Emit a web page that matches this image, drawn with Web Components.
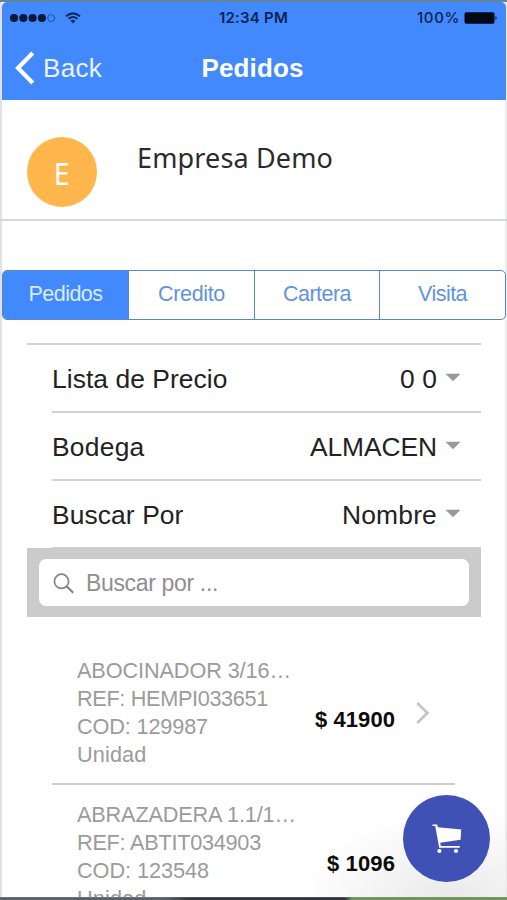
<!DOCTYPE html>
<html lang="es">
<head>
<meta charset="utf-8">
<title>Pedidos</title>
<style>
body{margin:0;width:507px;height:900px;overflow:hidden;background:#fff;font-family:"Liberation Sans",Arial,sans-serif}
</style>
</head>
<body>
<order-screen></order-screen>
<script>
const define=(name,html,setup)=>customElements.define(name,class extends HTMLElement{
  connectedCallback(){
    if(this.shadowRoot)return;
    const t=document.createElement('template');
    t.innerHTML=html;
    this.attachShadow({mode:'open'}).append(t.content.cloneNode(true));
    if(setup)setup(this,this.shadowRoot);
  }
});

// Text whose tracking is adjusted so that it takes the width given in "w".
define('fit-text',`<style>:host{display:inline-block;white-space:nowrap}span{display:inline-block}</style><span><slot></slot></span>`,(el,root)=>{
  const w=+el.getAttribute('w'),s=root.querySelector('span');
  const n=el.textContent.length;
  if(w&&n>1){
    s.style.letterSpacing=((w-s.getBoundingClientRect().width)/n).toFixed(3)+'px';
  }
});

define('status-bar',`<style>
:host{display:grid;grid-template-columns:1fr auto 1fr;align-items:center;height:32px;padding:0 8px 0 7px;color:#0b2250;font:600 15px/32px Inter,sans-serif;box-sizing:border-box}
svg{display:block}.l{display:flex;align-items:center;gap:9px}.r{display:flex;align-items:center;justify-content:flex-end;gap:4px;font-weight:500}
</style>
<div class="l"><svg width="47" height="10" viewBox="0 0 47 10"><g fill="#081a3c"><circle cx="5" cy="5" r="4.1"/><circle cx="14.3" cy="5" r="4.1"/><circle cx="23.6" cy="5" r="4.1"/><circle cx="32.9" cy="5" r="4.1"/></g><circle cx="42.2" cy="5" r="3.5" fill="none" stroke="#24509a" stroke-width="1"/></svg>
<svg width="16" height="12" viewBox="0 0 16 12" fill="none" stroke="#0f2a5c"><path d="M1 4.3Q8-1.6 15 4.3" stroke-width="2"/><path d="M3.5 6.8Q8 3.2 12.5 6.8" stroke-width="1.8"/><path d="M5.4 8.6Q8 6.7 10.6 8.6L8 11.5Z" fill="#0f2a5c" stroke="none"/></svg></div>
<fit-text w="69">12:34 PM</fit-text>
<div class="r"><fit-text w="43">100%</fit-text><svg width="34" height="12" viewBox="0 0 34 12"><rect x=".5" y=".3" width="30" height="11.4" rx="1.8" fill="#020914"/><path d="M31.5 4q2.2 2 0 4z" fill="#020914"/></svg></div>`);

define('nav-bar',`<style>
:host{display:grid;grid-template-columns:1fr auto 1fr;align-items:center;height:66px;padding:2px 15px 0 12px;color:#fff;box-sizing:border-box}
.b{display:flex;align-items:center;gap:8px;font-size:26px;color:#eaf3ff}h1{margin:0;font-size:26px;line-height:30px}svg{display:block}
</style>
<div class="b"><svg width="21" height="34" viewBox="0 0 21 34" fill="none" stroke="#fff" stroke-width="4.2"><path d="M18.8 2 4 17l14.8 15"/></svg><fit-text w="59">Back</fit-text></div>
<h1><fit-text w="102">Pedidos</fit-text></h1><span></span>`);

define('app-header',`<style>
:host{display:block;height:98px;margin:0 1px 0 2px;background:#4289fd;border-radius:5px 5px 0 0}
</style><status-bar></status-bar><nav-bar></nav-bar>`);

define('company-card',`<style>
:host{display:flex;align-items:flex-start;gap:40px;border-bottom:2px solid #d8d8da;padding:37px 0 0 27px;box-sizing:content-box;height:82px;font-family:"Noto Sans","Open Sans",sans-serif}
.a{width:70px;height:70px;border-radius:50%;background:#ffb74d;color:#fff;display:flex;align-items:center;justify-content:center;font-size:31px;line-height:70px;padding-top:2px;height:68px}
.a span{transform:scaleX(.92)}
.n{font-size:27px;line-height:40px;color:#2b2b2d;margin-top:1px}
</style><div class="a"><span>E</span></div><div class="n"><fit-text w="197"></fit-text></div>`,(el,root)=>{
  // The name is copied before the label is measured again.
  const f=document.createElement('fit-text');
  f.setAttribute('w','196');f.textContent=el.textContent;
  root.querySelector('fit-text').replaceWith(f);
});

define('tab-item',`<style>
:host{display:flex;align-items:center;justify-content:center;border-left:1.5px solid #5588c6;color:#6292e2;font-size:21.5px;box-sizing:border-box;padding-bottom:1px}
:host(:first-child){border-left:0}:host([active]){background:#4289fd;color:#d9ebff}
</style><slot></slot>`);
define('tab-strip',`<style>
:host{display:grid;grid-template-columns:125px 126px 125px 1fr;height:50px;margin:49px 1px 0 2px;border:1.5px solid #5588c6;border-radius:5px;overflow:hidden;box-sizing:border-box}
</style><slot></slot>`);

define('select-row',`<style>
:host{display:flex;align-items:center;justify-content:space-between;height:68px;box-sizing:border-box;border-bottom:2px solid #d2d2d2;margin-left:25px;padding:2px 20px 0 0;font-size:26.4px;color:#222}
.v{display:flex;align-items:center;gap:8px}svg{display:block;margin-top:-4px}
</style><slot name="label"></slot><div class="v"><slot name="value"></slot><svg width="16" height="9" viewBox="0 0 16 9"><path d="M.5.8h15L8 8.3z" fill="#999"/></svg></div>`);

define('search-box',`<style>
:host{display:block;background:#cbcbcb;padding:11px 12px 11px;height:47px;margin-top:-1px}
.i{display:flex;align-items:center;gap:12px;height:47px;background:#fff;border-radius:7px;padding:2px 14px 0;box-sizing:border-box;font-size:23px;color:#8f8f8f}
svg{display:block}
</style><div class="i"><svg width="21" height="21" viewBox="0 0 21 21" fill="none" stroke="#848484" stroke-width="1.7"><circle cx="8.5" cy="8.3" r="7.1"/><path d="m13.6 13.3 6.6 6.5" stroke-width="2.2"/></svg><slot></slot></div>`);

define('product-item',`<style>
:host{display:grid;grid-template-columns:1fr auto 40px;grid-template-rows:112px;height:112px;margin:0 25px;padding:16px 0 14px 25px;border-bottom:2px solid #cfcfcf}
.t{display:flex;flex-direction:column;font-size:21.7px;line-height:28px;color:#9b9b9b}
.p{font-weight:700;font-size:22px;line-height:28px;color:#0c0c0c;margin-top:49px;margin-right:20px}
svg{display:block;margin-top:44px}
</style><div class="t"><slot></slot></div><div class="p"><slot name="price"></slot></div><svg width="16" height="24" viewBox="0 0 16 24" fill="none" stroke="#c6c6c8" stroke-width="2.8"><path d="m2.2 2 10.2 10L2.2 22"/></svg>`);

define('cart-button',`<style>
:host{position:absolute;left:403px;top:793px;width:87px;height:87px;border-radius:50%;background:#3f51b5}
svg{display:block}
</style><svg width="87" height="87" viewBox="0 0 87 87"><path d="M29.5 29.5h4.6l.8 2.8L58.2 34.6 57.6 44.8 37.2 47.7 37.8 51H56.8v1.7H36.2L32.2 31h-2.7z" fill="#fff"/><circle cx="36.4" cy="56" r="2.1" fill="#fff"/><circle cx="53" cy="56" r="2.1" fill="#fff"/></svg>`);

define('order-screen',`<style>
:host{display:block;position:relative;width:507px;height:900px;overflow:hidden;background:#fff;border-top:2px solid #64829a;box-sizing:border-box}
.screen{height:898px;box-sizing:border-box;overflow:hidden;background:linear-gradient(90deg,#e2e2e4 2px,transparent 2px,transparent 505px,#eceeee 505px),radial-gradient(ellipse 150px 90px at 450px 898px,#e9e9e9,transparent)}
.form{margin:23px 26px 0 27px;border-top:2px solid #d2d2d2}
.list{margin:24px 0 0 27px;width:453px}
.edge{position:absolute;left:0;top:895px;width:507px;height:3px;background:linear-gradient(#8a979a99,transparent 40%),linear-gradient(90deg,#576065 0 165px,#303039 190px 345px,#71935a 352px)}
</style>
<div class="screen">
<app-header></app-header>
<company-card>Empresa Demo</company-card>
<tab-strip><tab-item active><fit-text w="74">Pedidos</fit-text></tab-item><tab-item><fit-text w="67">Credito</fit-text></tab-item><tab-item><fit-text w="68">Cartera</fit-text></tab-item><tab-item><fit-text w="49">Visita</fit-text></tab-item></tab-strip>
<div class="form">
<select-row><fit-text slot="label" w="175.5">Lista de Precio</fit-text><fit-text slot="value" w="37">0 0</fit-text></select-row>
<select-row><fit-text slot="label" w="92.5">Bodega</fit-text><fit-text slot="value" w="127">ALMACEN</fit-text></select-row>
<select-row><fit-text slot="label" w="131.5">Buscar Por</fit-text><fit-text slot="value" w="95">Nombre</fit-text></select-row>
<search-box><fit-text w="132">Buscar por ...</fit-text></search-box>
</div>
<div class="list">
<product-item><fit-text w="214">ABOCINADOR 3/16…</fit-text><fit-text w="191">REF: HEMPI033651</fit-text><fit-text w="131">COD: 129987</fit-text><fit-text w="69.5">Unidad</fit-text><fit-text slot="price" w="80">$ 41900</fit-text></product-item>
<product-item><fit-text w="219">ABRAZADERA 1.1/1…</fit-text><fit-text w="184">REF: ABTIT034903</fit-text><fit-text w="132">COD: 123548</fit-text><fit-text w="69.5">Unidad</fit-text><fit-text slot="price" w="68">$ 1096</fit-text></product-item>
</div>
</div>
<cart-button></cart-button>
<div class="edge"></div>`);
</script>
</body>
</html>
